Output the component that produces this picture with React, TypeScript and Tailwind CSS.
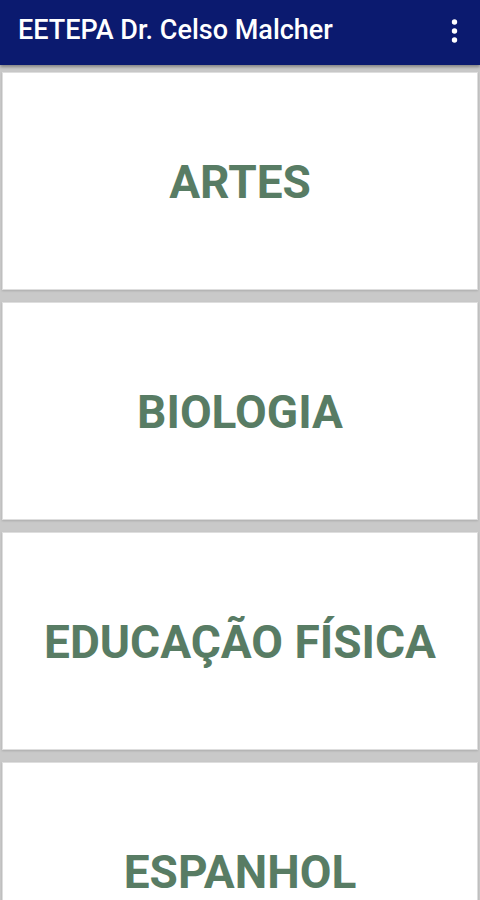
import React from "react";

const subjects = ["ARTES", "BIOLOGIA", "EDUCAÇÃO FÍSICA", "ESPANHOL"];

export default function App() {
  return (
    <div className="w-[480px] h-[900px] overflow-hidden bg-[#c9c9c9] flex flex-col" style={{ fontFamily: "Roboto, 'Liberation Sans', sans-serif" }}>
      <div className="h-[65px] shrink-0 bg-[#0b1a6f] flex items-center justify-between pl-[18px] pr-[22px] pb-[4px] shadow-[0_2px_3px_rgba(0,0,0,0.35)] z-10">
        <span className="text-white text-[27px] font-medium tracking-[0px]">EETEPA Dr. Celso Malcher</span>
        <svg width="7" height="26" viewBox="0 0 7 26" fill="white">
          <circle cx="3.5" cy="4" r="2.7" />
          <circle cx="3.5" cy="13" r="2.7" />
          <circle cx="3.5" cy="22" r="2.7" />
        </svg>
      </div>
      <div className="flex flex-col gap-[12px] pt-[7px] px-[2px]">
        {subjects.map((s) => (
          <div
            key={s}
            className="h-[218px] shrink-0 bg-white border border-[#dedede] shadow-[0_1px_2px_rgba(0,0,0,0.15)] flex items-center justify-center"
          >
            <span className="text-[#587c64] text-[46px] font-bold tracking-[0px] pt-[2px]">{s}</span>
          </div>
        ))}
      </div>
    </div>
  );
}
